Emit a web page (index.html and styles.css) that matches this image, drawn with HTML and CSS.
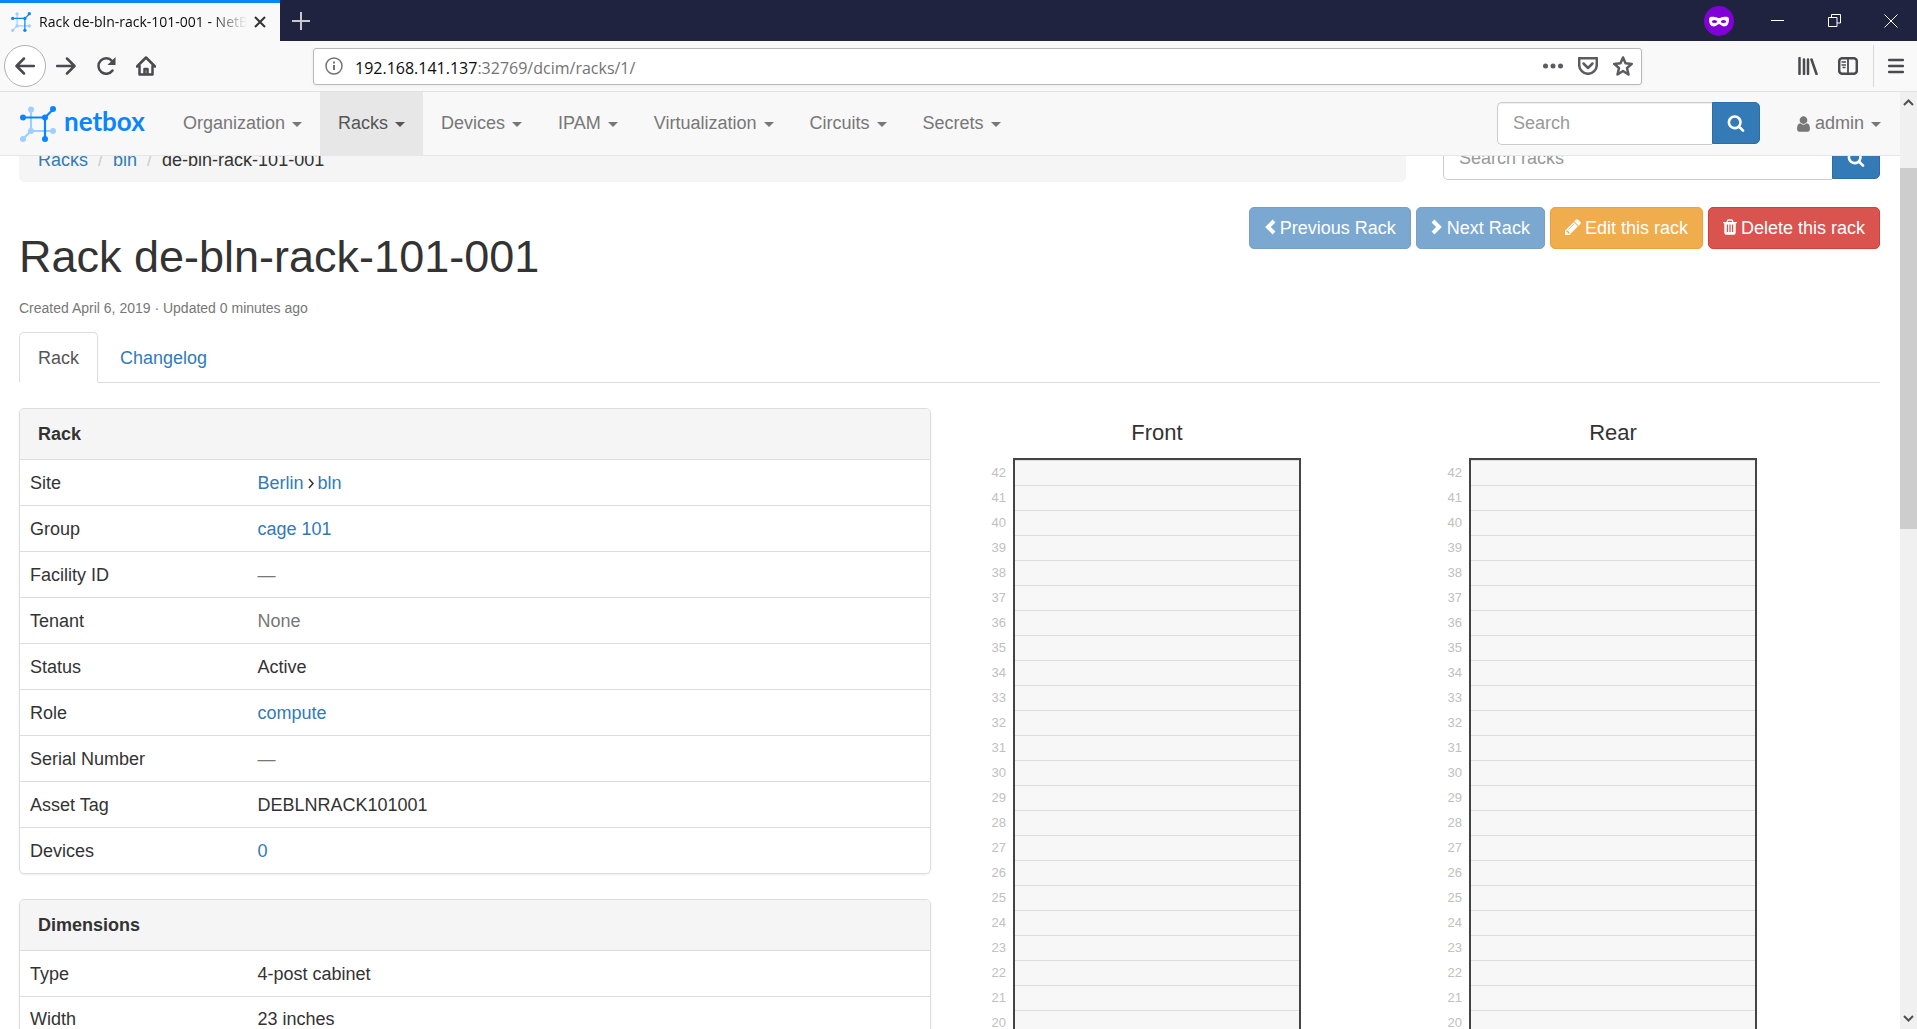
FILE: index.html
```html
<!DOCTYPE html>
<html lang="en">
<head>
<meta charset="utf-8">
<title>Rack de-bln-rack-101-001 - NetBox</title>
<link rel="stylesheet" href="styles.css">
</head>
<body>
<svg class="defs" aria-hidden="true">
  <symbol id="logo" viewBox="0 0 36 36">
    <g stroke="#9fcfff" fill="#9fcfff" stroke-width="2.200"><path d="M11 4v21M11 25h22M11 25L3 33" fill="none"/><circle cx="11" cy="3.500" r="3" stroke="none"/><circle cx="33" cy="25" r="3" stroke="none"/><circle cx="3" cy="33" r="3" stroke="none"/><circle cx="11" cy="25" r="3" stroke="none"/></g>
    <g stroke="#0a84ff" fill="#0a84ff" stroke-width="2.200"><path d="M25 33V11M3 11.500h22M25 11.500l8-8" fill="none"/><circle cx="33" cy="3" r="3" stroke="none"/><circle cx="3" cy="11.500" r="3" stroke="none"/><circle cx="25" cy="33" r="3" stroke="none"/><circle cx="25" cy="11.500" r="3" stroke="none"/></g>
  </symbol>
  <symbol id="search" viewBox="0 0 1792 1792"><path fill="currentColor" d="M1216 832q0-185-131.500-316.500t-316.500-131.500-316.500 131.500-131.500 316.500 131.500 316.500 316.500 131.500 316.500-131.500 131.500-316.500zm512 832q0 52-38 90t-90 38q-54 0-90-38l-343-342q-179 124-399 124-143 0-273.500-55.500t-225-150-150-225-55.500-273.500 55.500-273.500 150-225 225-150 273.500-55.500 273.500 55.500 225 150 150 225 55.500 273.500q0 220-124 399l343 343q37 37 37 90z"/></symbol>
  <symbol id="user" viewBox="256 0 1280 1792"><path fill="currentColor" d="M1536 1399q0 109-62.500 187t-150.500 78h-854q-88 0-150.500-78t-62.500-187q0-85 8.500-160.500t31.500-152 58.500-131 94-89 134.500-34.500q131 128 313 128t313-128q76 0 134.500 34.500t94 89 58.500 131 31.500 152 8.500 160.500zm-256-887q0 159-112.500 271.500t-271.500 112.500-271.500-112.500-112.500-271.500 112.500-271.500 271.500-112.500 271.500 112.500 112.500 271.500z"/></symbol>
  <symbol id="pencil" viewBox="128 128 1536 1536"><path fill="currentColor" d="M491 1536l91-91-235-235-91 91v107h128v128h107zm523-928q0-22-22-22-10 0-17 7l-542 542q-7 7-7 17 0 22 22 22 10 0 17-7l542-542q7-7 7-17zm-54-192l416 416-832 832h-416v-416zm683 96q0 53-37 90l-166 166-416-416 166-165q36-38 90-38 53 0 91 38l235 234q37 39 37 91z"/></symbol>
  <symbol id="trash" viewBox="192 128 1408 1536"><path fill="currentColor" d="M704 1376v-704q0-14-9-23t-23-9h-64q-14 0-23 9t-9 23v704q0 14 9 23t23 9h64q14 0 23-9t9-23zm256 0v-704q0-14-9-23t-23-9h-64q-14 0-23 9t-9 23v704q0 14 9 23t23 9h64q14 0 23-9t9-23zm256 0v-704q0-14-9-23t-23-9h-64q-14 0-23 9t-9 23v704q0 14 9 23t23 9h64q14 0 23-9t9-23zm-544-992h448l-48-117q-7-9-17-11h-317q-10 2-17 11zm928 32v64q0 14-9 23t-23 9h-96v948q0 83-47 143.500t-113 60.500h-832q-66 0-113-58.500t-47-141.500v-952h-96q-14 0-23-9t-9-23v-64q0-14 9-23t23-9h309l70-167q15-37 54-63t79-26h320q40 0 79 26t54 63l70 167h309q14 0 23 9t9 23z"/></symbol>
</svg>

<div class="browser">
  <header class="tabstrip">
    <div class="tab">
      <svg class="favicon"><use href="#logo"/></svg>
      <span class="tab-title">Rack de-bln-rack-101-001 - NetBox</span>
      <button class="icon-btn tab-close" aria-label="Close tab"><svg width="12" height="12" viewBox="0 0 12 12" stroke="#333" stroke-width="2"><path d="M1 1l10 10M11 1L1 11"/></svg></button>
    </div>
    <button class="icon-btn new-tab" aria-label="New tab"><svg width="18" height="18" viewBox="0 0 18 18" stroke="#c8c8d0" stroke-width="2"><path d="M9 0v18M0 9h18"/></svg></button>
    <div class="window-controls">
      <svg class="private" viewBox="0 0 30 30"><circle cx="15" cy="15" r="15" fill="#8000d7"/><path fill="#fff" d="M5 13c0-2.500 3-2.500 6-2 2 .4 3 1 4 1s2-.6 4-1c3-.5 6-.5 6 2 0 4.500-1.500 7.500-5 7.500-2.500 0-3.500-2.500-5-2.500s-2.500 2.500-5 2.500c-3.500 0-5-3-5-7.500z"/><ellipse cx="10.500" cy="15.500" rx="2.600" ry="1.500" fill="#8000d7"/><ellipse cx="19.500" cy="15.500" rx="2.600" ry="1.500" fill="#8000d7"/></svg>
      <button class="icon-btn win" aria-label="Minimize"><svg width="13" height="13" stroke="#fff"><path d="M0 6.500h13"/></svg></button>
      <button class="icon-btn win" aria-label="Restore"><svg width="13" height="13" fill="none" stroke="#fff"><path d="M.5 3.500h8.500v9H.500zM3.500 3.500V.500h9v8.500H9"/></svg></button>
      <button class="icon-btn win close" aria-label="Close"><svg width="14" height="14" stroke="#fff"><path d="M.5 .5l13 13M13.500 .5l-13 13"/></svg></button>
    </div>
  </header>

  <div class="toolbar">
    <div class="nav-buttons">
      <button class="icon-btn back" aria-label="Back"><svg width="20" height="18" viewBox="0 0 20 18" class="line"><path d="M19 9H2M9 1.500L1.500 9 9 16.500"/></svg></button>
      <button class="icon-btn" aria-label="Forward"><svg width="20" height="18" viewBox="0 0 20 18" class="line"><path d="M1 9h17M11 1.500L18.500 9 11 16.500"/></svg></button>
      <button class="icon-btn" aria-label="Reload"><svg width="20" height="18" viewBox="0 0 20 18" class="line"><path d="M16.500 13.500A7.700 7.700 0 1 1 16 4"/><path d="M19.500 0v8h-8z" fill="#4a4a4f" stroke="none"/></svg></button>
      <button class="icon-btn" aria-label="Home"><svg width="20" height="20" viewBox="0 0 20 20" class="line"><path d="M1 10.500L10 1.500l9 9M3.500 10v8.500h13V10"/><path d="M8.500 18v-5h3v5"/></svg></button>
    </div>
    <div class="urlbar">
      <svg width="18" height="18" viewBox="0 0 18 18" fill="none" stroke="#737373" stroke-width="1.500"><circle cx="9" cy="9" r="8"/><path d="M9 8v5M9 4.500v2" stroke-width="2"/></svg>
      <div class="url"><span class="host">192.168.141.137</span>:32769/dcim/racks/1/</div>
      <button class="icon-btn" aria-label="Page actions"><svg width="20" height="20" fill="#5c5c60"><circle cx="2.500" cy="10" r="2.500"/><circle cx="10" cy="10" r="2.500"/><circle cx="17.500" cy="10" r="2.500"/></svg></button>
      <button class="icon-btn" aria-label="Save to Pocket"><svg width="20" height="18" viewBox="0 0 20 18" class="line soft"><path d="M1.200 1.200h17.600V8a8.800 8.800 0 0 1-17.600 0z"/><path d="M5.500 6.500L10 11l4.500-4.500"/></svg></button>
      <button class="icon-btn" aria-label="Bookmark"><svg width="20" height="20" viewBox="0 0 20 20" class="line soft"><path d="M10 1.500l2.500 5.800 6.300.6-4.800 4.100 1.500 6.500-5.500-3.500-5.500 3.500L6 12 1.200 7.900l6.300-.6z"/></svg></button>
    </div>
    <div class="tool-buttons">
      <button class="icon-btn" aria-label="Library"><svg width="20" height="18" viewBox="0 0 20 18" class="line"><path d="M1.500 1v16M6 2.500V17M10 2.500V17M13.500 2.500L18.500 17"/></svg></button>
      <button class="icon-btn" aria-label="Sidebars"><svg width="20" height="18" viewBox="0 0 20 18" class="line"><rect x="1.200" y="1.200" width="17.600" height="15.600" rx="3"/><path d="M10 1v16" stroke-width="1.800"/><path d="M4 5h3.500M4 8h3.500M5 10.500h2" stroke-width="1.300"/></svg></button>
      <button class="icon-btn menu" aria-label="Menu"><svg width="16" height="16" viewBox="0 0 16 16" class="line"><path d="M1 2h14M1 8h14M1 14h14"/></svg></button>
    </div>
  </div>

  <div class="viewport">
    <div class="page">
      <nav class="navbar">
        <a class="brand" href="#"><svg class="brand-mark"><use href="#logo"/></svg><span>netbox</span></a>
        <a class="nav-link" href="#">Organization<i class="caret"></i></a>
        <a class="nav-link active" href="#">Racks<i class="caret"></i></a>
        <a class="nav-link" href="#">Devices<i class="caret"></i></a>
        <a class="nav-link" href="#">IPAM<i class="caret"></i></a>
        <a class="nav-link" href="#">Virtualization<i class="caret"></i></a>
        <a class="nav-link" href="#">Circuits<i class="caret"></i></a>
        <a class="nav-link" href="#">Secrets<i class="caret"></i></a>
        <form class="search nav-search"><input type="text" placeholder="Search" aria-label="Search"><button type="button" aria-label="Search"><svg><use href="#search"/></svg></button></form>
        <a class="nav-link" href="#"><svg class="user"><use href="#user"/></svg>admin<i class="caret"></i></a>
      </nav>

      <main class="content">
        <div class="top-row">
          <ol class="breadcrumb"><li><a href="#">Racks</a></li><li><a href="#">bln</a></li><li>de-bln-rack-101-001</li></ol>
          <form class="search"><input type="text" placeholder="Search racks" aria-label="Search racks"><button type="button" aria-label="Search racks"><svg><use href="#search"/></svg></button></form>
        </div>

        <div class="title-row">
          <h1>Rack de-bln-rack-101-001</h1>
          <div class="actions">
            <button class="btn primary"><svg width="12" height="16" viewBox="0 0 12 16" class="chev"><path d="M10 2L4 8l6 6"/></svg>Previous Rack</button>
            <button class="btn primary"><svg width="12" height="16" viewBox="0 0 12 16" class="chev"><path d="M2 2l6 6-6 6"/></svg>Next Rack</button>
            <button class="btn warning"><svg width="16" height="16"><use href="#pencil"/></svg>Edit this rack</button>
            <button class="btn danger"><svg width="14" height="16"><use href="#trash"/></svg>Delete this rack</button>
          </div>
        </div>
        <p class="meta">Created April 6, 2019 · Updated 0 minutes ago</p>

        <div class="tabs"><a class="page-tab current" href="#">Rack</a><a class="page-tab" href="#">Changelog</a></div>

        <div class="columns">
          <div class="details">
            <section class="panel">
              <h2>Rack</h2>
              <table>
                <tr><th scope="row">Site</th><td><a href="#">Berlin</a><svg class="angle" width="6" height="11" viewBox="0 0 6 11"><path d="M1 1l4 4.500L1 10"/></svg><a href="#">bln</a></td></tr>
                <tr><th scope="row">Group</th><td><a href="#">cage 101</a></td></tr>
                <tr><th scope="row">Facility ID</th><td class="muted">—</td></tr>
                <tr><th scope="row">Tenant</th><td class="muted">None</td></tr>
                <tr><th scope="row">Status</th><td>Active</td></tr>
                <tr><th scope="row">Role</th><td><a href="#">compute</a></td></tr>
                <tr><th scope="row">Serial Number</th><td class="muted">—</td></tr>
                <tr><th scope="row">Asset Tag</th><td>DEBLNRACK101001</td></tr>
                <tr><th scope="row">Devices</th><td><a href="#">0</a></td></tr>
              </table>
            </section>
            <section class="panel">
              <h2>Dimensions</h2>
              <table>
                <tr><th scope="row">Type</th><td>4-post cabinet</td></tr>
                <tr><th scope="row">Width</th><td>23 inches</td></tr>
              </table>
            </section>
          </div>
          <div class="elevations">
            <section class="elevation"><h3>Front</h3><ol class="rack" reversed></ol></section>
            <section class="elevation"><h3>Rear</h3><ol class="rack" reversed></ol></section>
          </div>
        </div>
      </main>
    </div>
    <div class="scrollbar" aria-hidden="true">
      <svg width="17" height="17" class="arrow"><path d="M4 11l4.500-4.500L13 11"/></svg>
      <div class="track"><div class="thumb"></div></div>
      <svg width="17" height="17" class="arrow"><path d="M4 6l4.500 4.500L13 6"/></svg>
    </div>
  </div>
</div>
<script src="rack.js"></script>
</body>
</html>
```
FILE: styles.css
```css
* { box-sizing: border-box; }
body { margin: 0; font: 18px/25px "Liberation Sans", Arial, sans-serif; color: #333; background: #fff; }
a { color: #337ab7; text-decoration: none; }
button, input { font: inherit; }
.defs { position: absolute; width: 0; height: 0; }
.browser { height: 100vh; display: flex; flex-direction: column; overflow: hidden; }
.icon-btn { display: flex; align-items: center; justify-content: center; padding: 0; border: 0; background: none; }
.line { fill: none; stroke: #4a4a4f; stroke-width: 2.5; stroke-linecap: round; stroke-linejoin: round; }
.soft { stroke: #5c5c60; }

/* Browser chrome */
.tabstrip { flex: none; display: flex; height: 41px; background: #202340; }
.tab { display: flex; align-items: center; width: 280px; padding: 0 14px 0 11px; background: #f9f9fa; border-top: 3px solid #0a84ff; color: #0c0c0d; }
.favicon { flex: none; width: 20px; height: 20px; margin-right: 8px; }
.tab-title { flex: 1; overflow: hidden; white-space: nowrap; font: 14px/20px "Open Sans", sans-serif; mask-image: linear-gradient(to left, transparent, #000 36px); }
.tab-close { margin-left: 7px; }
.new-tab { width: 42px; }
.window-controls { display: flex; align-items: center; margin-left: auto; }
.private { width: 30px; height: 30px; margin-right: 15px; }
.win { width: 57px; height: 40px; }
.close { width: 54px; padding-left: 2px; }
.toolbar { flex: none; display: flex; align-items: center; height: 51px; background: #f9f9fa; border-bottom: 1px solid #e0e0e1; }
.nav-buttons { display: flex; align-items: center; gap: 20px; margin-left: 4px; width: 309px; }
.back { width: 42px; height: 42px; margin-right: -10px; border: 1px solid #b1b1b3; border-radius: 50%; background: #fff; }
.urlbar { flex: 1; display: flex; align-items: center; gap: 15px; height: 37px; padding: 0 8px 0 11px; border: 1px solid #b8b8ba; border-radius: 3px; background: #fff; box-shadow: 0 1px 4px rgba(0,0,0,.06); }
.url { flex: 1; margin-left: -3px; padding-top: 3px; font: 16px/24px "Open Sans", sans-serif; color: #737373; }
.host { color: #0c0c0d; }
.tool-buttons { display: flex; align-items: center; gap: 20px; width: 275px; justify-content: flex-end; }
.menu { width: 44px; height: 42px; margin-left: -5px; border-left: 1px solid #d7d7db; }
.viewport { flex: 1; min-height: 0; display: flex; }
.page { flex: 1; min-width: 0; overflow: hidden; }

/* Site navigation */
.navbar { position: relative; z-index: 1; display: flex; align-items: center; height: 64px; padding-right: 1px; background: #f8f8f8; border-bottom: 1px solid #e7e7e7; }
.brand { display: flex; align-items: center; width: 165px; padding-left: 20px; gap: 8px; color: #0a84ff; font: 700 26px/30px Lato, sans-serif; }
.brand span { padding-bottom: 5px; }
.brand-mark { width: 36px; height: 36px; }
.nav-link { display: flex; align-items: center; height: 63px; padding: 0 18px; color: #777; }
.nav-link.active { background: #e7e7e7; color: #555; }
.caret { margin: 2px 0 0 7px; border: 5px solid transparent; border-top-color: currentColor; border-bottom: 0; }
.user { width: 13px; height: 18px; margin-right: 5px; }
.search { display: flex; height: 43px; }
.search input { flex: 1; min-width: 0; padding: 0 15px; border: 1px solid #ccc; border-right: 0; border-radius: 5px 0 0 5px; background: #fff; box-shadow: inset 0 1px 1px rgba(0,0,0,.075); }
.search input::placeholder { color: #999; opacity: 1; }
.search button { display: flex; align-items: center; justify-content: center; width: 48px; height: 42px; padding: 0; border: 1px solid #2e6da4; border-radius: 0 5px 5px 0; background: #337ab7; color: #fff; }
.search svg { width: 18px; height: 18px; }
.nav-search { width: 263px; margin: 0 19px 0 auto; }

/* Page header; the page is scrolled slightly beneath the navigation */
.content { margin-top: -19px; padding: 0 20px 0 19px; }
.top-row { display: grid; grid-template-columns: 1387fr 437fr; gap: 37px; margin-bottom: 25px; }
.breadcrumb { display: flex; margin: 0; padding: 11px 19px 9px; list-style: none; border-radius: 5px; background: #f5f5f5; }
.breadcrumb li + li::before { content: "/"; padding: 0 10px; color: #ccc; }
.title-row { display: flex; justify-content: space-between; }
h1 { margin: 25px 0 13px; font-size: 45px; line-height: 50px; font-weight: 400; }
.actions { display: flex; gap: 5px; }
.btn { display: flex; align-items: center; gap: 4px; height: 42px; padding: 0 14px; border: 1px solid; border-radius: 5px; color: #fff; }
.btn svg { margin-top: -2px; }
.primary { background: #7aa8d0; border-color: #76a0c6; }
.warning { background: #f0ad4e; border-color: #eea236; }
.danger { background: #d9534f; border-color: #d43f3a; }
.chev { fill: none; stroke: #fff; stroke-width: 4; }
.meta { margin: 0 0 12px; padding-top: 1px; font-size: 14px; line-height: 24px; color: #777; }
.tabs { display: flex; gap: 3px; margin-bottom: 25px; border-bottom: 1px solid #ddd; }
.page-tab { padding: 13px 18px 11px; height: 51px; margin-bottom: -1px; border: 1px solid transparent; border-radius: 5px 5px 0 0; }
.page-tab.current { border-color: #ddd #ddd #fff; background: #fff; color: #555; }

/* Detail panels */
.columns { display: grid; grid-template-columns: 1fr 1fr; gap: 38px; margin-right: -1px; }
.panel { margin-bottom: 25px; border: 1px solid #ddd; border-radius: 5px; box-shadow: 0 1px 2px rgba(0,0,0,.08); overflow: hidden; }
.panel h2 { margin: 0; padding: 13px 18px 12px; font-size: 18px; line-height: 25px; background: #f5f5f5; }
table { width: 100%; border-collapse: collapse; }
th, td { height: 46px; padding: 2px 10px 0; border-top: 1px solid #ddd; text-align: left; font-weight: 400; }
tr:last-child > * { height: 45px; }
th { width: 25%; }
.muted { color: #777; }
.angle { margin: 0 4px; fill: none; stroke: #333; stroke-width: 1.5; }

/* Rack elevations */
.elevations { display: grid; grid-template-columns: 1fr 1fr; }
.elevation { padding: 0 19px 0 44px; }
.elevation h3 { width: 288px; margin: 12px 0 13px; font-size: 22px; line-height: 25px; font-weight: 400; text-align: center; }
.rack { width: 288px; margin: 0; padding: 0; border: 2px solid #444; background: #f7f7f7; list-style: none; }
.rack li { display: flex; height: 25px; border-top: 1px solid #ddd; }
.unit { width: 32px; margin-left: -41px; text-align: right; font-size: 13px; line-height: 24px; color: #c0c0c0; }

.scrollbar { display: flex; flex-direction: column; width: 17px; background: #f0f0f0; }
.arrow { flex: none; fill: none; stroke: #505050; stroke-width: 2; margin: 2px 0; }
.track { flex: 1; padding-top: 55px; }
.thumb { height: 43%; background: #cdcdcd; }
```
FILE: rack.js
```js
// Each elevation lists its 42 rack units from top to bottom.
document.querySelectorAll('.rack').forEach(function (rack) {
  for (var u = 42; u >= 1; u--) {
    var slot = document.createElement('li');
    var label = document.createElement('span');
    label.className = 'unit';
    label.textContent = u;
    slot.appendChild(label);
    rack.appendChild(slot);
  }
});
```
